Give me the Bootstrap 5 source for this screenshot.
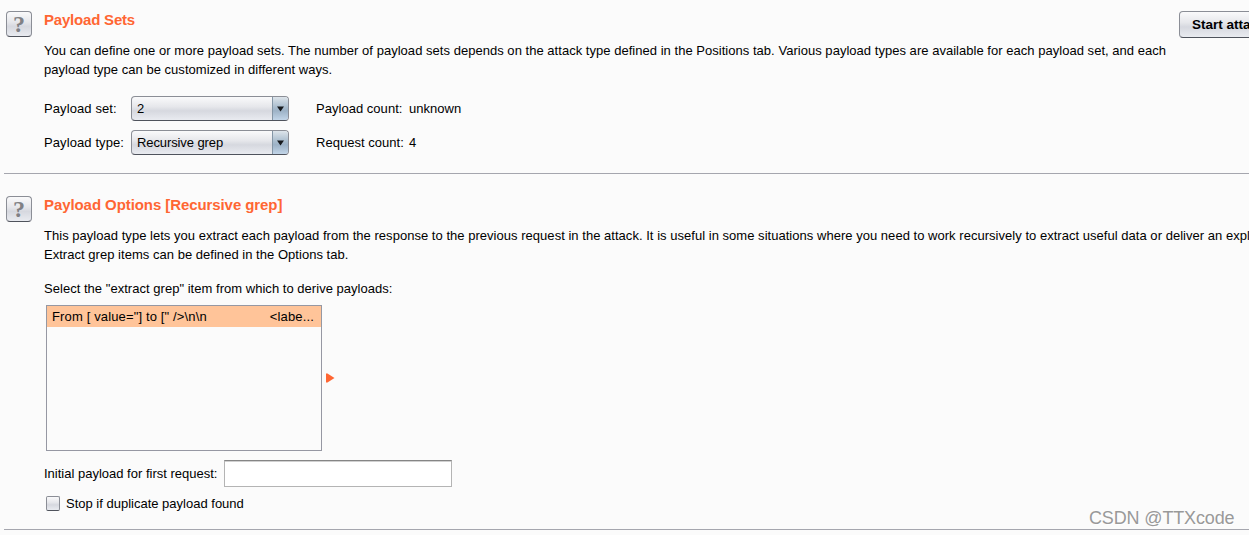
<!DOCTYPE html>
<html lang="en">
<head>
  <meta charset="UTF-8">
  <meta name="viewport" content="width=device-width, initial-scale=1">
  <title>Payloads</title>
  <link rel="stylesheet" href="https://cdn.jsdelivr.net/npm/bootstrap@5.3.0/dist/css/bootstrap.min.css">
  <style>
    body {
      background-color: #fbfbfb;
      color: #000;
      font-family: "Liberation Sans", Arial, sans-serif;
      font-size: 13px;
      line-height: 19px;
      letter-spacing: 0.03px;
      height: 535px;
      overflow: hidden;
    }

    .panel {
      margin-left: 4px;
      border-bottom: 1px solid #a5a6ae;
    }

    .panel-sets {
      height: 174px;
      padding: 11px 0 0 2px;
    }

    .panel-options {
      height: 356px;
      padding: 22px 0 0 2px;
    }

    /* Raised grey look shared by buttons, selects and the checkbox */
    .raised {
      background: linear-gradient(#fafafb 0%, #e6e7eb 42%, #d6d8df 60%, #e9ebf0 100%);
      border: 1px solid #8b8e96;
      border-bottom-color: #4f535c;
    }

    .help-btn {
      width: 26px;
      height: 26px;
      margin-right: 12px;
      border-radius: 4px;
      color: #808185;
      font-family: "Liberation Serif", "Times New Roman", serif;
      font-size: 24px;
      font-weight: bold;
      line-height: 25px;
    }

    .panel-title {
      color: #ff6633;
      font-size: 15px;
      font-weight: bold;
      line-height: 18px;
      letter-spacing: -0.08px;
      margin: 0 0 12px;
    }

    .panel-sets .panel-title {
      letter-spacing: -0.2px;
    }

    .start-btn {
      width: 98px;
      height: 27px;
      left: 1179px;
      top: 11px;
      padding: 0 0 0 12px;
      border-radius: 4px;
      font-size: 13.5px;
      font-weight: bold;
      line-height: 25px;
      text-align: left;
    }

    .fields {
      margin-top: 17px;
    }

    .field-row {
      height: 25px;
      margin-bottom: 9px;
    }

    .field-name {
      width: 87px;
      letter-spacing: 0.1px;
    }

    .combo {
      width: 158px;
      height: 25px;
      margin-right: 27px;
      padding-left: 5px;
      border-radius: 4px;
      letter-spacing: -0.1px;
      overflow: hidden;
    }

    .combo-arrow {
      width: 16px;
      background: linear-gradient(#dde4ea 0%, #a9bccd 45%, #9db2c6 60%, #c2d5e8 100%);
      border-left: 1px solid #8496a6;
    }

    .count-name {
      width: 93px;
    }

    .grep-label {
      margin: 15px 0 7px;
    }

    .grep-list {
      width: 276px;
      height: 146px;
      margin-left: 2px;
      border: 1px solid #9698a3;
    }

    .grep-item {
      height: 21px;
      padding: 0 7px 0 5px;
      background-color: #ffc499;
      line-height: 21px;
      letter-spacing: 0.14px;
    }

    .first-row {
      margin-top: 9px;
      letter-spacing: 0;
    }

    .first-row label {
      width: 180px;
    }

    .first-payload {
      width: 228px;
      height: 27px;
      padding: 0;
      background: #fff;
      border: 1px solid #b4b4b4;
      border-top: 1px solid #858585;
      border-radius: 0;
      box-shadow: inset 0 1px 0 #d0d0d0;
    }

    .stop-row {
      margin-top: 7px;
      letter-spacing: 0;
    }

    .stop-box {
      width: 14px;
      height: 15px;
      margin: 0 6px 0 2px;
      border-radius: 2px;
    }

    .watermark {
      left: 1089px;
      top: 507px;
      color: #999;
      font-size: 18px;
      line-height: 22px;
      letter-spacing: -0.15px;
      text-shadow: 1px 1px 0 #fff;
    }
  </style>
</head>
<body class="position-relative">
  <!-- Payload sets -->
  <section class="panel panel-sets d-flex align-items-start">
    <button class="help-btn raised flex-shrink-0 p-0 text-center">?</button>
    <div>
      <h2 class="panel-title">Payload Sets</h2>
      <div class="text-nowrap">You can define one or more payload sets. The number of payload sets depends on the attack type defined in the Positions tab. Various payload types are available for each payload set, and each<br>payload type can be customized in different ways.</div>
      <div class="fields">
        <div class="field-row d-flex align-items-center">
          <label class="field-name">Payload set:</label>
          <div class="combo raised d-flex align-items-center justify-content-between">
            <span>2</span>
            <span class="combo-arrow h-100 d-flex align-items-center justify-content-center"><svg width="7" height="6" viewBox="0 0 7 6"><path d="M0 .5h7L3.500 5.500z" fill="#17191c"/></svg></span>
          </div>
          <span class="count-name">Payload count:</span><span>unknown</span>
        </div>
        <div class="field-row d-flex align-items-center">
          <label class="field-name">Payload type:</label>
          <div class="combo raised d-flex align-items-center justify-content-between">
            <span>Recursive grep</span>
            <span class="combo-arrow h-100 d-flex align-items-center justify-content-center"><svg width="7" height="6" viewBox="0 0 7 6"><path d="M0 .5h7L3.500 5.500z" fill="#17191c"/></svg></span>
          </div>
          <span class="count-name">Request count:</span><span>4</span>
        </div>
      </div>
    </div>
  </section>
  <button class="start-btn raised position-absolute text-nowrap">Start attack</button>

  <!-- Payload options -->
  <section class="panel panel-options d-flex align-items-start">
    <button class="help-btn raised flex-shrink-0 p-0 text-center">?</button>
    <div>
      <h2 class="panel-title">Payload Options [Recursive grep]</h2>
      <div class="text-nowrap">This payload type lets you extract each payload from the response to the previous request in the attack. It is useful in some situations where you need to work recursively to extract useful data or deliver an exploit.<br>Extract grep items can be defined in the Options tab.</div>
      <div class="grep-label">Select the "extract grep" item from which to derive payloads:</div>
      <div class="d-flex align-items-center">
        <div class="grep-list">
          <div class="grep-item d-flex justify-content-between"><span>From [ value="] to [" /&gt;\n\n</span><span>&lt;labe...</span></div>
        </div>
        <svg class="ms-1" width="9" height="10" viewBox="0 0 9 10"><path d="M0 .5h1.500L8.500 5 1.500 9.500H0z" fill="#ff6633"/></svg>
      </div>
      <div class="first-row d-flex align-items-center">
        <label for="firstPayload">Initial payload for first request:</label>
        <input type="text" id="firstPayload" class="first-payload">
      </div>
      <div class="stop-row d-flex align-items-center">
        <span class="stop-box raised" role="checkbox" aria-checked="false"></span>
        <span>Stop if duplicate payload found</span>
      </div>
    </div>
  </section>

  <div class="watermark position-absolute">CSDN @TTXcode</div>
  <script src="https://cdn.jsdelivr.net/npm/bootstrap@5.3.0/dist/js/bootstrap.bundle.min.js"></script>
</body>
</html>
